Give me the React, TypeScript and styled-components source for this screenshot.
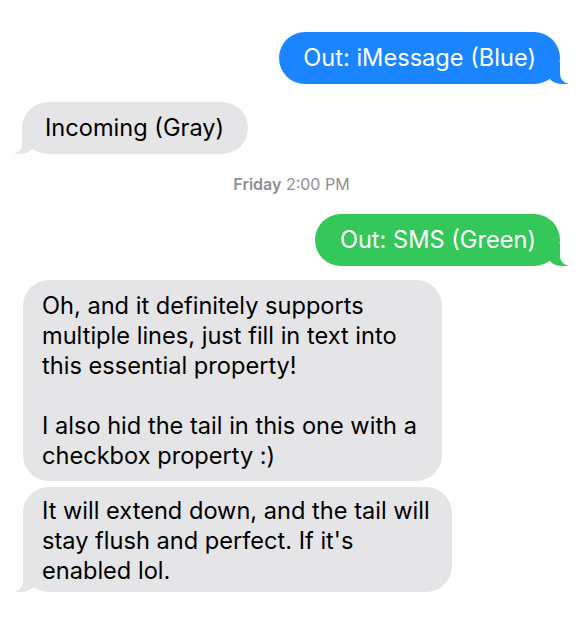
import React from "react";
import styled, { createGlobalStyle, css } from "styled-components";

const GlobalStyle = createGlobalStyle`
  html, body { margin: 0; padding: 0; background: #ffffff; }
  body { font-family: Inter, "Liberation Sans", Arial, sans-serif; -webkit-font-smoothing: antialiased; }
  * { box-sizing: border-box; }
`;

const Thread = styled.div`
  display: flex;
  flex-direction: column;
  width: 582px;
  padding: 32px 22px 20px 22px;
`;

type Kind = "blue" | "green" | "gray";

const colors: Record<Kind, string> = {
  blue: "#1A85FF",
  green: "#34C759",
  gray: "#E5E5E7",
};

const Bubble = styled.div<{
  $kind: Kind;
  $tail?: boolean;
  $mt?: number;
  $w?: number;
  $pad?: string;
}>`
  position: relative;
  width: ${(p) => (p.$w ? `${p.$w}px` : "auto")};
  margin-top: ${(p) => p.$mt ?? 0}px;
  margin-left: ${(p) => (p.$kind === "gray" && p.$w ? "1px" : "0")};
  border-radius: 26px;
  font-size: 23.6px;
  line-height: 30px;
  white-space: pre-wrap;
  background: ${(p) => colors[p.$kind]};
  color: ${(p) => (p.$kind === "gray" ? "#000000" : "#ffffff")};
  align-self: ${(p) => (p.$kind === "gray" ? "flex-start" : "flex-end")};
  padding: ${(p) => p.$pad ?? "11px 24px 11px 24px"};
  ${(p) =>
    p.$tail &&
    (p.$kind === "gray"
      ? css`
          &::before {
            content: "";
            position: absolute;
            bottom: 0;
            left: -8px;
            width: 22px;
            height: 22px;
            background: ${colors.gray};
            border-bottom-right-radius: 16px 14px;
          }
          &::after {
            content: "";
            position: absolute;
            bottom: 0;
            left: -10px;
            width: 10px;
            height: 22px;
            background: #ffffff;
            border-bottom-right-radius: 10px;
          }
        `
      : css`
          &::before {
            content: "";
            position: absolute;
            bottom: 0;
            right: -8px;
            width: 22px;
            height: 22px;
            background: ${colors[p.$kind]};
            border-bottom-left-radius: 16px 14px;
          }
          &::after {
            content: "";
            position: absolute;
            bottom: 0;
            right: -10px;
            width: 10px;
            height: 22px;
            background: #ffffff;
            border-bottom-left-radius: 10px;
          }
        `)}
`;

const Stamp = styled.div`
  align-self: center;
  margin-top: 21px;
  margin-left: 1px;
  font-size: 16px;
  line-height: 18px;
  color: #8e8e93;
  span { font-weight: 600; }
`;

export default function App() {
  return (
    <>
      <GlobalStyle />
      <Thread>
        <Bubble $kind="blue" $tail>Out: iMessage (Blue)</Bubble>
        <Bubble $kind="gray" $tail $mt={18} $pad="11px 24px 11px 23px">
          Incoming (Gray)
        </Bubble>
        <Stamp>
          <span>Friday</span> 2:00 PM
        </Stamp>
        <Bubble $kind="green" $tail $mt={21} $pad="11px 24px 11px 25px">
          Out: SMS (Green)
        </Bubble>
        <Bubble $kind="gray" $mt={14} $w={419} $pad="11px 20px 10px 19px">
          {"Oh, and it definitely supports multiple lines, just fill in text into this essential property!\n\nI also hid the tail in this one with a checkbox property :)"}
        </Bubble>
        <Bubble $kind="gray" $tail $mt={6} $w={429} $pad="9px 20px 6px 19px">
          It will extend down, and the tail will stay flush and perfect. If it's enabled lol.
        </Bubble>
      </Thread>
    </>
  );
}
